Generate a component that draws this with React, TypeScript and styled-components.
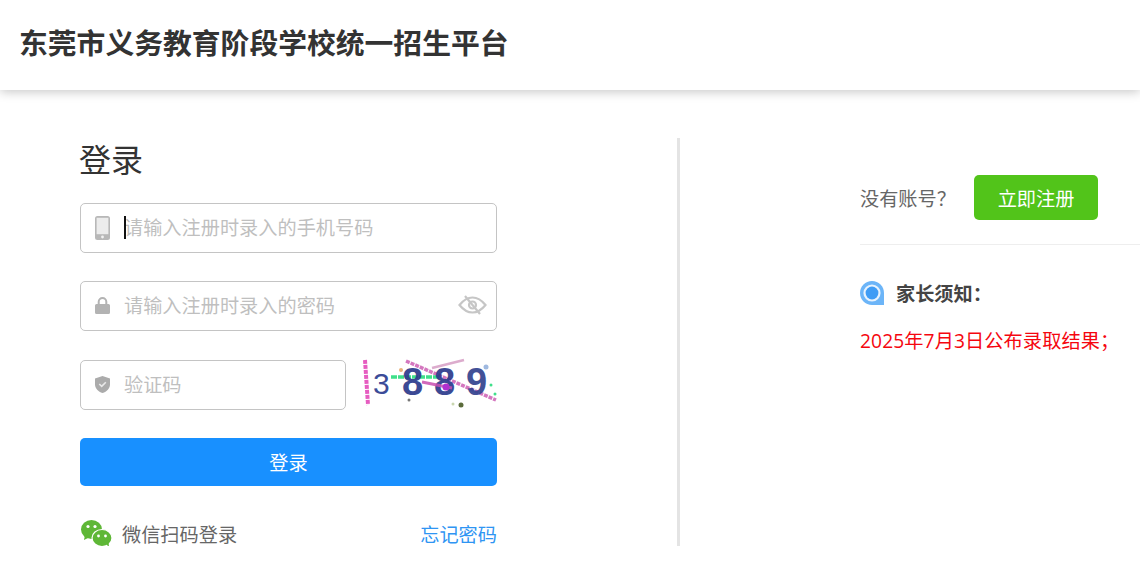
import React, { type JSX } from "react";
import styled, { createGlobalStyle } from "styled-components";

const GlobalStyle = createGlobalStyle`
  * { box-sizing: border-box; }
  html, body { margin: 0; padding: 0; background: #fff; overflow: hidden; }
  body { font-family: "Noto Sans CJK SC", "Liberation Sans", sans-serif; }
`;

const PhoneIcon = () => (
  <svg width="15" height="24" viewBox="0 0 15 24">
    <rect x="0" y="0" width="15" height="24" rx="2.5" fill="#b8b8b8" />
    <rect x="1.600" y="1.800" width="11.800" height="16.400" fill="#ececec" />
    <circle cx="7.500" cy="21" r="1.400" fill="#f2f2f2" />
  </svg>
);

const LockIcon = () => (
  <svg width="15" height="17" viewBox="0 0 15 17">
    <path fill="#b3b3b3" fillRule="evenodd" d="M7.500 0a4.800 4.800 0 0 1 4.800 4.800V7h1.200A1.500 1.500 0 0 1 15 8.500v7a1.500 1.500 0 0 1-1.500 1.500h-12A1.500 1.500 0 0 1 0 15.500v-7A1.500 1.500 0 0 1 1.500 7h1.200V4.800A4.800 4.800 0 0 1 7.500 0zm0 2a2.800 2.800 0 0 0-2.800 2.800V7h5.600V4.800A2.800 2.800 0 0 0 7.500 2z" />
  </svg>
);

const ShieldIcon = () => (
  <svg width="15" height="17" viewBox="0 0 15 17">
    <path fill="#ababab" d="M7.500 0l7.500 2.400v5.800C15 12.500 11.800 15.700 7.500 17 3.200 15.700 0 12.500 0 8.200V2.400z" />
    <path fill="none" stroke="#e9e9e9" strokeWidth="1.600" d="M4.300 8l2.400 2.400 4.100-4.100" />
  </svg>
);

const EyeOffIcon = () => (
  <svg width="29" height="20" viewBox="0 0 29 20" fill="none" stroke="#c6c6c6" strokeWidth="2.200">
    <path d="M1.500 10C5.500 5 9.800 2.500 14.500 2.500S23.500 5 27.500 10c-4 5-8.300 7.500-13 7.500S5.500 15 1.500 10z" />
    <circle cx="14.500" cy="10" r="3.500" />
    <path d="M7 1l15 18" />
  </svg>
);

const WechatIcon = () => (
  <svg width="31" height="27" viewBox="0 0 31 27">
    <ellipse cx="10.500" cy="9.500" rx="10.500" ry="9.500" fill="#5eb736" />
    <path fill="#5eb736" d="M4 15l-1 5 6-3z" />
    <ellipse cx="21" cy="18" rx="10" ry="8.500" fill="#5eb736" stroke="#fff" strokeWidth="1.200" />
    <path fill="#5eb736" d="M25 24l3 3-.5-5z" />
    <circle cx="7" cy="6.500" r="1.600" fill="#fff" />
    <circle cx="14" cy="6.500" r="1.600" fill="#fff" />
    <circle cx="17.500" cy="16" r="1.400" fill="#fff" />
    <circle cx="24.500" cy="16" r="1.400" fill="#fff" />
  </svg>
);

const NoticeIcon = () => (
  <svg width="24" height="24" viewBox="0 0 24 24">
    <path fill="#6cb5f8" d="M12 0c6.600 0 12 5.400 12 12v12H12C5.400 24 0 18.600 0 12S5.400 0 12 0z" />
    <circle cx="12" cy="12" r="8.600" fill="#e8f3fe" />
    <circle cx="12" cy="12" r="6.400" fill="#3f9cf5" />
  </svg>
);

const digitFont = "'Liberation Sans', sans-serif";

const Captcha = () => (
  <CaptchaImage width="136" height="50" viewBox="0 0 136 50">
    <path d="M3 2l3 45" stroke="#e65cc0" strokeWidth="4" strokeDasharray="4 1" fill="none" />
    <path d="M44 3l90 39" stroke="#cf68b8" strokeWidth="3.500" strokeDasharray="4 1" fill="none" opacity=".9" />
    <path d="M70 10l32-8" stroke="#dcaccd" strokeWidth="2.500" fill="none" />
    <path d="M29 19h48" stroke="#3fe08a" strokeWidth="3.500" strokeDasharray="6 1" fill="none" />
    <text x="11" y="36" fontFamily={digitFont} fontSize="30" fill="#3c4c98">3</text>
    <text x="40" y="37" fontFamily={digitFont} fontSize="38" fontWeight="700" fill="#2c3a8c" opacity=".92">8</text>
    <text x="72" y="37" fontFamily={digitFont} fontSize="38" fontWeight="700" fill="#2c3a8c" opacity=".92">8</text>
    <text x="104" y="37" fontFamily={digitFont} fontSize="38" fontWeight="700" fill="#33438f" opacity=".92">9</text>
    <path d="M60 24l30 6" stroke="#c84fb0" strokeWidth="3" fill="none" opacity=".85" />
    <circle cx="84" cy="29" r="3.500" fill="#b030d0" />
    <circle cx="39" cy="12" r="2" fill="#e9b27a" />
    <circle cx="124" cy="9" r="2.500" fill="#9fb9e0" />
    <circle cx="129" cy="27" r="1.500" fill="#3fe08a" />
    <circle cx="133" cy="36" r="1.500" fill="#3fe08a" />
    <circle cx="99" cy="47" r="2.500" fill="#5b6b3a" />
    <circle cx="91" cy="46" r="1.500" fill="#c9d6b0" />
    <circle cx="47" cy="42" r="1.500" fill="#777" />
  </CaptchaImage>
);

export default function App(): JSX.Element {
  return (
    <>
      <GlobalStyle />
      <Header>
        <SiteTitle>东莞市义务教育阶段学校统一招生平台</SiteTitle>
      </Header>
      <Main>
        <LoginColumn>
          <Heading>登录</Heading>
          <Field>
            <FieldIcon><PhoneIcon /></FieldIcon>
            <Caret />
            <Input placeholder="请输入注册时录入的手机号码" />
          </Field>
          <Field>
            <FieldIcon><LockIcon /></FieldIcon>
            <Input placeholder="请输入注册时录入的密码" />
            <EyeButton><EyeOffIcon /></EyeButton>
          </Field>
          <CaptchaRow>
            <Field $width={266}>
              <FieldIcon><ShieldIcon /></FieldIcon>
              <Input placeholder="验证码" />
            </Field>
            <Captcha />
          </CaptchaRow>
          <SubmitButton>登录</SubmitButton>
          <FooterRow>
            <WechatLogin>
              <WechatIcon />
              微信扫码登录
            </WechatLogin>
            <ForgotLink>忘记密码</ForgotLink>
          </FooterRow>
        </LoginColumn>
        <SideColumn>
          <RegisterRow>
            <RegisterText>没有账号？</RegisterText>
            <RegisterButton>立即注册</RegisterButton>
          </RegisterRow>
          <NoticeTitle>
            <NoticeIcon />
            家长须知：
          </NoticeTitle>
          <NoticeText>2025年7月3日公布录取结果；</NoticeText>
        </SideColumn>
      </Main>
    </>
  );
}

const Header = styled.header`
  height: 90px;
  padding: 0 0 5px 19px;
  display: flex;
  align-items: center;
  background: #fff;
  box-shadow: 0 2px 10px rgba(0, 0, 0, 0.22);
`;

const SiteTitle = styled.h1`
  margin: 0;
  font-size: 28.8px;
  font-weight: 700;
  line-height: 1;
  color: #333;
  white-space: nowrap;
`;

const Main = styled.main`
  display: flex;
  margin-top: 48px;
  height: 408px;
`;

const LoginColumn = styled.section`
  width: 680px;
  padding-left: 80px;
  padding-right: 180px;
  border-right: 3px solid #e4e4e4;
  display: flex;
  flex-direction: column;
`;

const Heading = styled.h2`
  margin: -1px 0 24px -1px;
  font-size: 32px;
  font-weight: 400;
  line-height: 42px;
  color: #333;
`;

const Field = styled.div<{ $width?: number }>`
  position: relative;
  width: ${({ $width }) => ($width ? `${$width}px` : "100%")};
  height: 50px;
  margin-bottom: 28.3px;
  flex-shrink: 0;
`;

const Input = styled.input`
  width: 100%;
  height: 100%;
  padding: 0 50px 2px 43px;
  border: 1px solid #c4c4c4;
  border-radius: 5px;
  outline: none;
  background: #fff;
  font-family: inherit;
  font-size: 19.2px;
  color: #333;

  &::placeholder {
    color: #bfbfbf;
    opacity: 1;
  }
`;

const FieldIcon = styled.span`
  position: absolute;
  left: 15px;
  top: 0;
  width: 15px;
  height: 100%;
  padding-bottom: 1px;
  display: flex;
  align-items: center;
  justify-content: center;
`;

const Caret = styled.span`
  position: absolute;
  left: 44px;
  top: 13px;
  width: 1.5px;
  height: 23px;
  background: #111;
  z-index: 1;
`;

const EyeButton = styled.span`
  position: absolute;
  right: 10px;
  top: 14px;
  display: flex;
`;

const CaptchaRow = styled.div`
  display: flex;
  justify-content: space-between;
  align-items: flex-start;
  width: 418px;
`;

const CaptchaImage = styled.svg`
  margin-top: -2px;
  flex-shrink: 0;
`;

const SubmitButton = styled.button`
  width: 100%;
  height: 48px;
  flex-shrink: 0;
  border: 0;
  border-radius: 5px;
  background: #1890ff;
  color: #fff;
  font-family: inherit;
  font-size: 19.2px;
`;

const FooterRow = styled.div`
  display: flex;
  justify-content: space-between;
  align-items: center;
  margin-top: 34px;
  height: 28px;
`;

const WechatLogin = styled.div`
  display: flex;
  align-items: center;
  gap: 10px;
  margin-left: 1px;
  font-size: 19.2px;
  color: #666;
`;

const ForgotLink = styled.a`
  font-size: 19.2px;
  color: #2f95f3;
`;

const SideColumn = styled.aside`
  flex: 1;
  padding-left: 180px;
`;

const RegisterRow = styled.div`
  display: flex;
  align-items: center;
  height: 107px;
  padding: 14px 0 1px;
  border-bottom: 1px solid #eee;
`;

const RegisterText = styled.span`
  width: 114px;
  font-size: 19.2px;
  color: #666;
`;

const RegisterButton = styled.button`
  width: 124px;
  height: 45px;
  border: 0;
  border-radius: 5px;
  background: #52c41a;
  color: #fff;
  font-family: inherit;
  font-size: 19.2px;
`;

const NoticeTitle = styled.div`
  display: flex;
  align-items: center;
  gap: 12px;
  margin-top: 35px;
  height: 26px;
  font-size: 19.2px;
  font-weight: 700;
  color: #444;
`;

const NoticeText = styled.p`
  margin: 21px 0 0;
  font-family: "Open Sans", "Noto Sans CJK SC", sans-serif;
  font-size: 19.2px;
  letter-spacing: 0.1px;
  line-height: 28px;
  color: #f5060f;
  white-space: nowrap;
`;
